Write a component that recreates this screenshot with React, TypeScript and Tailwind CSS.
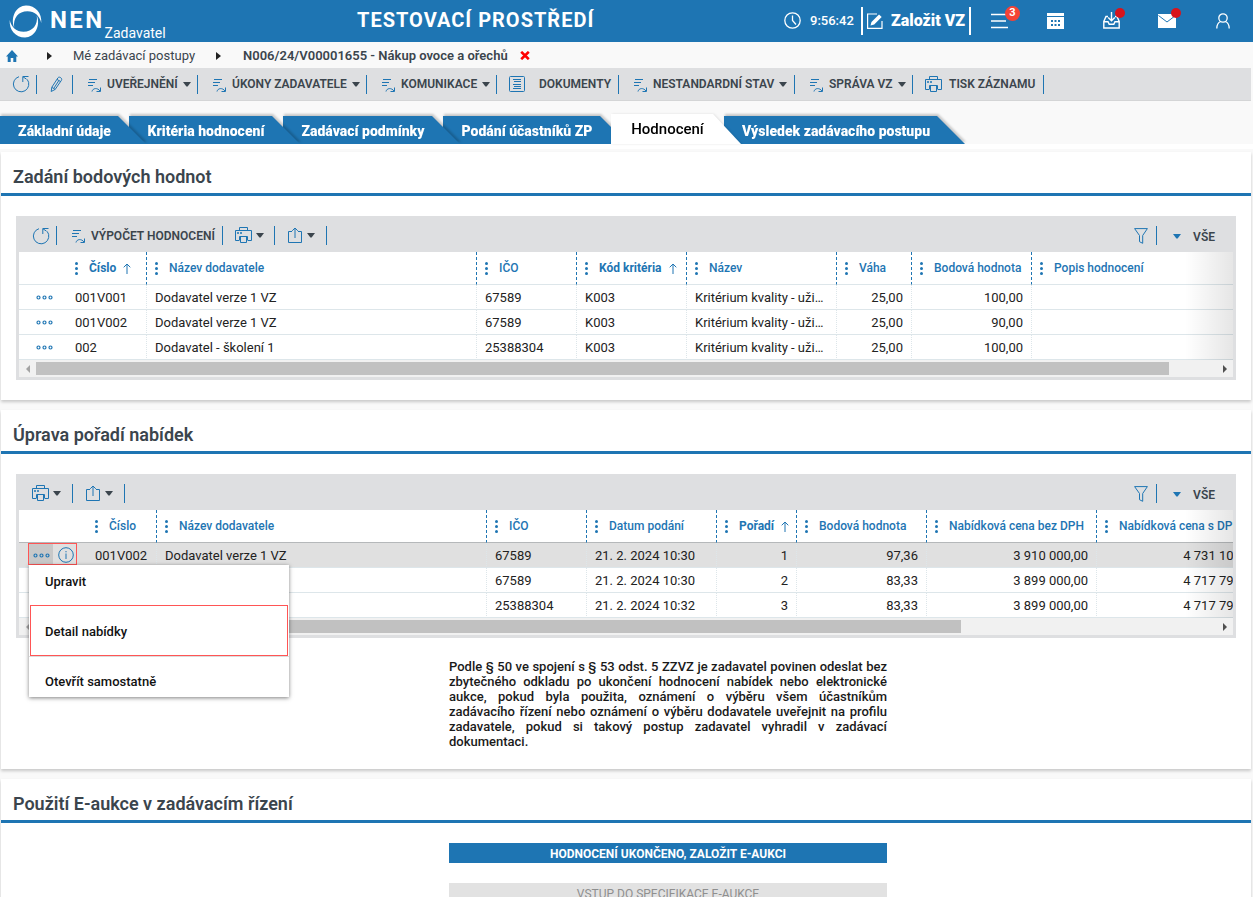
import { useState } from 'react'
import type { ReactNode } from 'react'
import clsx from 'clsx'

interface Column {
  label: string
  width: string
  align?: 'right'
  sorted?: boolean
}

const POINT_COLUMNS: Column[] = [
  { label: 'Číslo', width: 'w-[80px]', sorted: true },
  { label: 'Název dodavatele', width: 'w-[330px]' },
  { label: 'IČO', width: 'w-[100px]' },
  { label: 'Kód kritéria', width: 'w-[110px]', sorted: true },
  { label: 'Název', width: 'w-[150px]' },
  { label: 'Váha', width: 'w-[75px]', align: 'right' },
  { label: 'Bodová hodnota', width: 'w-[120px]', align: 'right' },
  { label: 'Popis hodnocení', width: 'w-[250px]' },
]

const POINT_ROWS = [
  ['001V001', 'Dodavatel verze 1 VZ', '67589', 'K003', 'Kritérium kvality - uži…', '25,00', '100,00', ''],
  ['001V002', 'Dodavatel verze 1 VZ', '67589', 'K003', 'Kritérium kvality - uži…', '25,00', '90,00', ''],
  ['002', 'Dodavatel - školení 1', '25388304', 'K003', 'Kritérium kvality - uži…', '25,00', '100,00', ''],
]

const OFFER_COLUMNS: Column[] = [
  { label: 'Číslo', width: 'w-[70px]' },
  { label: 'Název dodavatele', width: 'w-[330px]' },
  { label: 'IČO', width: 'w-[100px]' },
  { label: 'Datum podání', width: 'w-[130px]' },
  { label: 'Pořadí', width: 'w-[80px]', align: 'right', sorted: true },
  { label: 'Bodová hodnota', width: 'w-[130px]', align: 'right' },
  { label: 'Nabídková cena bez DPH', width: 'w-[170px]', align: 'right' },
  { label: 'Nabídková cena s DPH', width: 'w-[170px]', align: 'right' },
]

const OFFER_ROWS = [
  ['001V002', 'Dodavatel verze 1 VZ', '67589', '21. 2. 2024 10:30', '1', '97,36', '3 910 000,00', '4 731 100,00'],
  ['001V001', 'Dodavatel verze 1 VZ', '67589', '21. 2. 2024 10:30', '2', '83,33', '3 899 000,00', '4 717 790,00'],
  ['002', 'Dodavatel - školení 1', '25388304', '21. 2. 2024 10:32', '3', '83,33', '3 899 000,00', '4 717 790,00'],
]

const TABS = [
  { label: 'Základní údaje', width: 'w-[146px]', z: 'z-[5]' },
  { label: 'Kritéria hodnocení', width: 'w-[171px]', z: 'z-[4]' },
  { label: 'Zadávací podmínky', width: 'w-[177px]', z: 'z-[3]' },
  { label: 'Podání účastníků ZP', width: 'w-[185px]', z: 'z-[2]' },
  { label: 'Hodnocení', width: 'w-[130px]', z: 'z-[1]' },
  { label: 'Výsledek zadávacího postupu', width: 'w-[241px]', z: 'z-0' },
]

/* ---------- icons ---------- */

function RefreshIcon() {
  return (
    <svg width="18" height="18" viewBox="0 0 18 18" fill="none" stroke="#1e75b3" strokeWidth="1">
      <path d="M7 1.7A7.7 7.7 0 1 0 15.2 4.4" />
      <path d="M10.8 7V1.5H16.5M11 1.8L14.5 4.2" />
    </svg>
  )
}

function PencilIcon() {
  return (
    <svg width="13" height="17" viewBox="0 0 13 17" fill="none" stroke="#1e75b3" strokeWidth="1">
      <path d="M1.2 15.5l.6-4.2L7.9 1.9c1.1-1.9 4.7.2 3.6 2.3L5.2 13.4z" />
      <path d="M1.8 11.3l3.4 2.1M7 3.4l3.6 2.2M4 12l4.8-7.4" />
    </svg>
  )
}

function ProcessIcon() {
  return (
    <svg width="14" height="17" viewBox="0 0 14 17" fill="none" stroke="#1e75b3" strokeWidth="1">
      <path d="M1 3.500h8M0 6.500h7M0 9.500h5" />
      <path d="M4 15.500c.8-3.600 5.500-4 8-.5M12.500 11.500v4h-4" />
    </svg>
  )
}

function DocumentIcon() {
  return (
    <svg width="17" height="17" viewBox="0 0 17 17" fill="none" stroke="#1e75b3" strokeWidth="1">
      <rect x=".5" y=".5" width="15" height="15" rx="1" />
      <path d="M4 3.500h8M5 5.500h7M4 8.500h8M5 10.500h7M4 12.500h8" />
    </svg>
  )
}

function PrinterIcon() {
  return (
    <svg width="17" height="17" viewBox="0 0 17 17" fill="none" stroke="#1e75b3" strokeWidth="1">
      <path d="M4.500 3.500V.5h8v3M4.500 13.500h-4v-10h16v10h-4" />
      <path d="M5.500 9.500h6v6h-6zM4.500 13V9.500h8V13" />
      <path d="M2 6h2M5 6h2" strokeWidth="1.500" />
    </svg>
  )
}

function ShareIcon() {
  return (
    <svg width="14" height="17" viewBox="0 0 14 17" fill="none" stroke="#1e75b3" strokeWidth="1">
      <path d="M4 4.500H.5v11h13v-11H10M7 11V1.200M4.200 3.800L7 1l2.800 2.800" />
    </svg>
  )
}

function FunnelIcon() {
  return (
    <svg width="14" height="16" viewBox="0 0 14 16" fill="none" stroke="#1e75b3" strokeWidth="1">
      <path d="M.6.6h12.800L8.700 7.500v7.800l-3.200-1.600V7.500z" />
    </svg>
  )
}

function Caret({ className = 'text-[#3b454d]' }: { className?: string }) {
  return (
    <svg width="8" height="5" viewBox="0 0 8 5" className={className} fill="currentColor">
      <path d="M0 0h8L4.600 4.500H3.400z" />
    </svg>
  )
}

function MoreIcon() {
  return (
    <svg width="17" height="5" viewBox="0 0 17 5" fill="none" stroke="#1e75b3" strokeWidth="1.200">
      <circle cx="2.500" cy="2.500" r="1.500" />
      <circle cx="8.500" cy="2.500" r="1.500" />
      <circle cx="14.500" cy="2.500" r="1.500" />
    </svg>
  )
}

function InfoIcon() {
  return (
    <svg width="16" height="16" viewBox="0 0 16 16" fill="none" stroke="#1e75b3" strokeWidth="1">
      <circle cx="8" cy="8" r="7.300" />
      <path d="M8 6.500V12M8 4v1.300" />
    </svg>
  )
}

function CrumbArrow() {
  return (
    <svg width="5" height="8" viewBox="0 0 5 8" fill="#222">
      <path d="M0 0v8l5-4z" />
    </svg>
  )
}

// two crescents, the second one is the first turned by 180 degrees
function Logo() {
  return (
    <svg width="33" height="33" viewBox="0 0 33 33" fill="#fff">
      <path d="M5.200 22.500C1 12 7.500.5 17 .5c9.500 0 16 7.500 15.300 17.500C30.500 10.500 25.500 6.300 18.500 6.300 9.500 6.300 3.800 13 5.200 22.500z" />
      <path
        d="M5.200 22.500C1 12 7.500.5 17 .5c9.500 0 16 7.500 15.300 17.500C30.500 10.500 25.500 6.300 18.500 6.300 9.500 6.300 3.800 13 5.200 22.500z"
        transform="rotate(180 16.500 16.500)"
      />
    </svg>
  )
}

/* ---------- toolbar ---------- */

interface ToolProps {
  icon: ReactNode
  label?: string
  caret?: boolean
  title?: string
  className: string
}

function Tool({ icon, label, caret, title, className }: ToolProps) {
  return (
    <button
      type="button"
      aria-label={label ?? title}
      className={clsx('flex h-[19px] flex-none items-center border-r border-[#1e75b3]', className)}
    >
      {icon}
      {label && <span className="whitespace-nowrap text-xs font-semibold text-[#3b454d]">{label}</span>}
      {caret && <Caret />}
    </button>
  )
}

function GridToolbar({ children }: { children: ReactNode }) {
  return (
    <div className="flex h-9 items-center pt-[3px]">
      {children}
      <div className="ml-auto flex items-center">
        <button type="button" aria-label="Filtr" className="flex h-[19px] items-center border-r border-[#1e75b3] pr-2">
          <FunnelIcon />
        </button>
        <button type="button" className="flex items-center gap-3 pl-4 pr-[18px] pt-0.5 text-xs font-semibold text-[#3b454d]">
          <Caret className="text-[#1e75b3]" />
          VŠE
        </button>
      </div>
    </div>
  )
}

/* ---------- grid ---------- */

interface GridProps {
  name: string
  columns: Column[]
  rows: string[][]
  actionWidth: string
  tableWidth: string
  thumb: number
  selected?: number
  onMore?: () => void
}

function Grid({ name, columns, rows, actionWidth, tableWidth, thumb, selected, onMore }: GridProps) {
  return (
    <>
      <div className="relative overflow-hidden bg-white">
        <table aria-label={name} className={clsx('table-fixed border-separate border-spacing-0 text-[13px]', tableWidth)}>
          <thead>
            <tr className="h-[33px]">
              <th className={clsx('border-b', selected === undefined ? 'border-[#dde6ea]' : 'border-[#b5b8ba]', actionWidth)} />
              {columns.map(c => (
                <th
                  key={c.label}
                  className={clsx(
                    'border-b border-r border-r-[#1e75b3] p-0 [border-right-style:dashed]',
                    selected === undefined ? 'border-b-[#dde6ea]' : 'border-b-[#b5b8ba]',
                    c.width,
                  )}
                >
                  <button
                    type="button"
                    className={clsx(
                      'flex items-center whitespace-nowrap pl-2 text-xs text-[#1e75b3]',
                      c.sorted ? 'font-bold' : 'font-medium',
                    )}
                  >
                    <svg width="3" height="13" viewBox="0 0 3 13" fill="#1e75b3" className="mr-[11px]">
                      <circle cx="1.500" cy="1.500" r="1.500" />
                      <circle cx="1.500" cy="6.500" r="1.500" />
                      <circle cx="1.500" cy="11.500" r="1.500" />
                    </svg>
                    {c.label}
                    {c.sorted && (
                      <svg width="8" height="11" viewBox="0 0 8 11" fill="none" stroke="#1e75b3" strokeWidth="1" className="ml-[7px]">
                        <path d="M4 11V1M.7 4.300L4 1l3.300 3.300" />
                      </svg>
                    )}
                  </button>
                </th>
              ))}
            </tr>
          </thead>
          <tbody>
            {rows.map((row, r) => (
              <tr key={r} className={clsx('h-[25px] text-[#222]', r === selected && 'bg-[#e0e0e0]')}>
                <td className="border-b border-[#dde6ea] p-0 align-top">
                  {r === selected ? (
                    <div className="ml-[9px] flex h-[22px] w-[49px] items-stretch border border-[#f55] bg-[#e0e0e0]">
                      <button type="button" aria-label="Nabídka akcí" onClick={onMore} className="flex w-6 items-center justify-center bg-[#c8c8c8] pt-0.5">
                        <MoreIcon />
                      </button>
                      <button type="button" aria-label="Informace" className="ml-[5px] flex items-center pt-0.5">
                        <InfoIcon />
                      </button>
                    </div>
                  ) : (
                    <button type="button" aria-label="Nabídka akcí" className="flex h-6 items-center pl-[17px]">
                      <MoreIcon />
                    </button>
                  )}
                </td>
                {row.map((cell, i) => (
                  <td
                    key={i}
                    className={clsx(
                      'whitespace-nowrap border-b border-r border-[#dde6ea] px-2 pb-0 pt-0.5 leading-[22px] [border-right-style:dotted]',
                      columns[i].align === 'right' && 'text-right',
                    )}
                  >
                    {cell}
                  </td>
                ))}
              </tr>
            ))}
          </tbody>
        </table>
        <div className="pointer-events-none absolute inset-y-0 right-0 w-12 bg-gradient-to-r from-transparent to-black/10" />
      </div>
      {/* horizontal scrollbar */}
      <div className="flex h-[17px] items-center bg-[#f1f1f1]">
        <span className="flex w-[17px] flex-none justify-center">
          <svg width="4" height="8" viewBox="0 0 4 8" fill="#a3a3a3"><path d="M4 0v8L0 4z" /></svg>
        </span>
        <div className="flex-1">
          <div className="h-[13px] bg-[#c1c1c1]" style={{ width: `${thumb}%` }} />
        </div>
        <span className="flex w-[17px] flex-none justify-center">
          <svg width="4" height="8" viewBox="0 0 4 8" fill="#505050"><path d="M0 0v8l4-4z" /></svg>
        </span>
      </div>
    </>
  )
}

function Section({ title, children }: { title: string; children: ReactNode }) {
  return (
    <section className="bg-white shadow-[0_2px_3px_rgba(0,0,0,0.2)]">
      <h2 className="h-11 border-b-[3px] border-[#1e75b3] pl-3 pt-[11px] text-lg font-semibold leading-7 text-[#3b454d]">{title}</h2>
      <div className="px-[15px] py-5">{children}</div>
    </section>
  )
}

/* ---------- header ---------- */

function Header() {
  return (
    <header className="flex h-[42px] items-center bg-[#1e75b3] text-white">
      <div className="flex h-full w-[357px] flex-none items-center pl-[9px]">
        <Logo />
        <span className="ml-2 pb-0.5 text-2xl font-bold tracking-widest">NEN</span>
        <span className="self-end pb-px text-sm leading-4">Zadavatel</span>
      </div>
      <h1 className="whitespace-nowrap pb-0.5 text-xl font-bold tracking-wider">TESTOVACÍ PROSTŘEDÍ</h1>
      <div className="ml-auto flex h-full flex-none items-center pb-px pr-0.5">
        <svg width="17" height="17" viewBox="0 0 17 17" fill="none" stroke="#fff" strokeWidth="1.300">
          <circle cx="8.500" cy="8.500" r="7.700" />
          <path d="M8.500 3.500v5l3.500 4" />
        </svg>
        <time className="ml-[9px] w-[51px] text-[13px] font-medium">9:56:42</time>
        <button type="button" className="flex h-7 w-[110px] items-center gap-2 border-x-2 border-white pl-1 text-base font-black">
          <svg width="16" height="16" viewBox="0 0 16 16" fill="none" stroke="#fff" strokeWidth="1.200" className="flex-none">
            <path d="M10 1H.6v14.400H15V8" />
            <path fill="#fff" stroke="none" d="M3.500 12.500l1-3.600L12 1.400l2.700 2.600-7.500 7.500z" />
          </svg>
          <span className="whitespace-nowrap">Založit VZ</span>
        </button>
        <button type="button" aria-label="Úkoly" className="relative flex w-14 justify-center">
          <svg width="17" height="16" viewBox="0 0 17 16" stroke="#fff" strokeWidth="1.500">
            <path d="M0 1.500h17M0 8h15M0 14.500h17" />
          </svg>
          <span className="absolute -top-[7px] right-[7px] flex size-[15px] items-center justify-center rounded-full bg-[#f44336] text-[11px] font-bold">
            3
          </span>
        </button>
        <button type="button" aria-label="Kalendář" className="flex w-14 justify-center">
          <svg width="17" height="16" viewBox="0 0 17 16" fill="#fff">
            <path d="M0 0h17v3H0z" />
            <path
              fillRule="evenodd"
              d="M0 4h17v12H0zM4 7v2h2V7zm3.500 0v2h2V7zM11 7v2h2V7zM4 11v2h2v-2zm3.500 0v2h2v-2zm3.500 0v2h2v-2z"
            />
          </svg>
        </button>
        <button type="button" aria-label="Doručené" className="relative flex w-14 justify-center">
          <svg width="17" height="17" viewBox="0 0 17 17" fill="none" stroke="#fff" strokeWidth="1.400">
            <path d="M5 4.500H3L.8 9.500V16h15.400V9.500L14 4.500h-2M1 9.700h4l1.200 2.500h4.600L12 9.700h4" />
            <path d="M8.500 0v8.500M5.200 5.500l3.300 3.200 3.300-3.200" />
          </svg>
          <span className="absolute -top-1 right-3.5 size-2.5 rounded-full bg-[#d8141c]" />
        </button>
        <button type="button" aria-label="Zprávy" className="relative flex w-14 justify-center">
          <svg width="18" height="14" viewBox="0 0 18 14">
            <path fill="#fff" d="M0 0h18v14H0z" />
            <path d="M.5 1.500L9 8l8.500-6.500" fill="none" stroke="#1e75b3" />
          </svg>
          <span className="absolute -top-1.5 right-3.5 size-2.5 rounded-full bg-[#d8141c]" />
        </button>
        <button type="button" aria-label="Uživatel" className="flex w-14 justify-center">
          <svg width="14" height="16" viewBox="0 0 14 16" fill="none" stroke="#fff" strokeWidth="1.300">
            <circle cx="7" cy="5" r="4.200" />
            <path d="M.8 15.500c0-4 1.700-6.200 4-7M13.200 15.500c0-4-1.700-6.200-4-7" />
          </svg>
        </button>
      </div>
    </header>
  )
}

export default function App() {
  const [activeTab, setActiveTab] = useState(4)
  const [menuOpen, setMenuOpen] = useState(true)

  return (
    <div className="h-screen overflow-hidden bg-[#f9f9f9] font-[Roboto,sans-serif]">
      <Header />

      {/* breadcrumbs */}
      <nav className="flex h-[26px] items-center pt-px text-[13px] text-[#3b454d]">
        <a href="#home" aria-label="Domů" className="ml-[6px] mr-[29px]">
          <svg width="12" height="12" viewBox="0 0 12 12" fill="#1e75b3">
            <path d="M6 0L0 6.500h1.700V12h3V8h2.600v4h3V6.500H12z" />
          </svg>
        </a>
        <CrumbArrow />
        <a href="#postupy" className="mx-[21px]">Mé zadávací postupy</a>
        <CrumbArrow />
        <a href="#zaznam" className="ml-[22px] font-semibold">N006/24/V00001655 - Nákup ovoce a ořechů</a>
        <button type="button" aria-label="Zavřít" className="ml-3">
          <svg width="10" height="9" viewBox="0 0 10 9" stroke="#f00" strokeWidth="2.600">
            <path d="M1.200.8l7.600 7.400M8.800.8L1.200 8.200" />
          </svg>
        </button>
      </nav>

      {/* record toolbar */}
      <div className="mr-0.5 flex h-[33px] items-center border-b border-[#d4d5d6] bg-[#dedfe1]">
        <Tool icon={<RefreshIcon />} title="Obnovit" className="w-[37px] pl-3" />
        <Tool icon={<PencilIcon />} title="Upravit" className="w-[36px] pl-[13px]" />
        <Tool icon={<ProcessIcon />} label="UVEŘEJNĚNÍ" caret className="w-[125px] gap-[5px] pl-[15px]" />
        <Tool icon={<ProcessIcon />} label="ÚKONY ZADAVATELE" caret className="w-[169px] gap-[5px] pl-[15px]" />
        <Tool icon={<ProcessIcon />} label="KOMUNIKACE" caret className="w-[130px] gap-[5px] pl-[15px]" />
        <Tool icon={<DocumentIcon />} label="DOKUMENTY" className="w-[122px] gap-[13px] pl-3" />
        <Tool icon={<ProcessIcon />} label="NESTANDARDNÍ STAV" caret className="w-[176px] gap-[5px] pl-[15px]" />
        <Tool icon={<ProcessIcon />} label="SPRÁVA VZ" caret className="w-[118px] gap-[5px] pl-[15px]" />
        <Tool icon={<PrinterIcon />} label="TISK ZÁZNAMU" className="w-[131px] gap-[7px] pl-3" />
      </div>

      {/* tabs */}
      <div role="tablist" className="isolate flex h-[43px] items-end">
        {TABS.map((t, i) => (
          <div
            key={t.label}
            className={clsx(
              'relative -mr-[17px] flex-none',
              t.width,
              i === activeTab ? 'z-10 drop-shadow-[1px_0_1px_rgba(0,0,0,0.1)]' : 'drop-shadow-[1px_-2px_1px_rgba(0,0,0,0.2)]',
              i !== activeTab && t.z,
            )}
          >
            <button
              type="button"
              role="tab"
              aria-selected={i === activeTab}
              onClick={() => setActiveTab(i)}
              className={clsx(
                'block w-full whitespace-nowrap pr-[17px] text-center [clip-path:polygon(0_0,calc(100%-28px)_0,100%_100%,0_100%)]',
                i === activeTab
                  ? 'h-[30px] bg-white text-[15px] font-medium text-black'
                  : 'h-7 bg-[#1e75b3] pt-0.5 text-sm font-black text-white',
              )}
            >
              {t.label}
            </button>
          </div>
        ))}
      </div>
      <div className="mb-[3px] h-[5px] bg-white" />

      <main className="ml-px mr-0.5 flex flex-col gap-2.5">
        <Section title="Zadání bodových hodnot">
          <div className="border-[3px] border-t-0 border-[#dedfe1] bg-[#dedfe1]">
            <GridToolbar>
              <Tool icon={<RefreshIcon />} title="Obnovit" className="w-[38px] pl-[13px]" />
              <Tool icon={<ProcessIcon />} label="VÝPOČET HODNOCENÍ" className="w-[166px] gap-[5px] pl-[15px]" />
              <Tool icon={<PrinterIcon />} title="Tisk" caret className="w-[52px] gap-1 pl-3" />
              <Tool icon={<ShareIcon />} title="Export" caret className="w-[52px] gap-[5px] pl-[13px]" />
            </GridToolbar>
            <Grid
              name="Zadání bodových hodnot"
              columns={POINT_COLUMNS}
              rows={POINT_ROWS}
              actionWidth="w-[48px]"
              tableWidth="w-[1263px]"
              thumb={96}
            />
          </div>
        </Section>

        <Section title="Úprava pořadí nabídek">
          <div className="relative border-[3px] border-t-0 border-[#dedfe1] bg-[#dedfe1]">
            <GridToolbar>
              <Tool icon={<PrinterIcon />} title="Tisk" caret className="w-[54px] gap-1 pl-[13px]" />
              <Tool icon={<ShareIcon />} title="Export" caret className="w-[52px] gap-[5px] pl-[13px]" />
            </GridToolbar>
            <Grid
              name="Úprava pořadí nabídek"
              columns={OFFER_COLUMNS}
              rows={OFFER_ROWS}
              actionWidth="w-[68px]"
              tableWidth="w-[1248px]"
              thumb={78.4}
              selected={0}
              onMore={() => setMenuOpen(o => !o)}
            />
            {menuOpen && (
              <div
                role="menu"
                className="absolute left-[10px] top-[91px] z-20 w-[260px] bg-white text-[13px] font-medium text-[#111] shadow-[0_1px_4px_rgba(0,0,0,0.5)]"
              >
                <button type="button" role="menuitem" className="block h-10 w-full pb-1.5 pl-4 text-left">Upravit</button>
                <button
                  type="button"
                  role="menuitem"
                  className="mx-px block h-[51px] w-[258px] border border-[#f55] pl-[14px] pt-0.5 text-left"
                >
                  Detail nabídky
                </button>
                <button type="button" role="menuitem" className="block h-[41px] w-full border-t border-[#dcdcdc] pl-4 pt-2.5 text-left">
                  Otevřít samostatně
                </button>
              </div>
            )}
          </div>
          <div className="mt-[21px] grid grid-cols-[433fr_438fr_349fr]">
            <p className="col-start-2 text-justify text-[13px] font-medium leading-[15px] text-[#1a1a1a]">
              Podle § 50 ve spojení s § 53 odst. 5 ZZVZ je zadavatel povinen odeslat bez zbytečného odkladu po ukončení
              hodnocení nabídek nebo elektronické aukce, pokud byla použita, oznámení o výběru všem účastníkům zadávacího
              řízení nebo oznámení o výběru dodavatele uveřejnit na profilu zadavatele, pokud si takový postup zadavatel
              vyhradil v zadávací dokumentaci.
            </p>
          </div>
        </Section>

        <Section title="Použití E-aukce v zadávacím řízení">
          <div className="grid grid-cols-[433fr_438fr_349fr] gap-y-5">
            <button type="button" className="col-start-2 h-5 bg-[#1e75b3] pt-0.5 text-xs font-bold text-white">
              HODNOCENÍ UKONČENO, ZALOŽIT E-AUKCI
            </button>
            <button type="button" disabled className="col-start-2 h-5 bg-[#e2e2e2] pt-0.5 text-xs text-[#8f8f8f]">
              VSTUP DO SPECIFIKACE E-AUKCE
            </button>
          </div>
        </Section>
      </main>
    </div>
  )
}
